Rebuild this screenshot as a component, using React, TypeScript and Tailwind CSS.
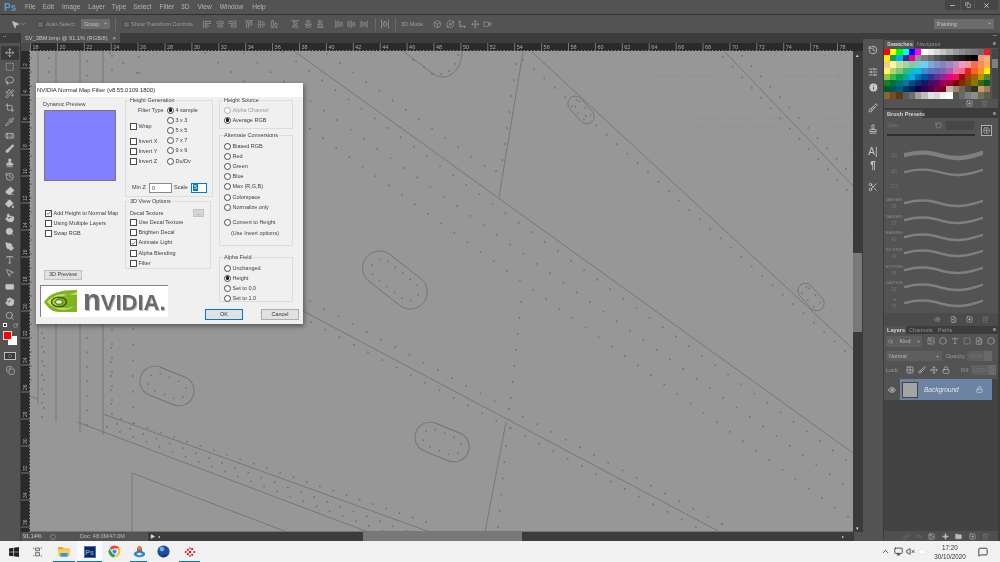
import React from "react";
import {
  Move, ChevronDown, SquareDashed, Lasso, Wand2, Crop, Pipette, Bandage, Brush, Stamp, History,
  Eraser, PaintBucket, Pointer, Search, PenTool, Type, MousePointer2, RectangleHorizontal, Hand,
  AlignStartVertical, AlignCenterVertical, AlignEndVertical, AlignStartHorizontal, AlignCenterHorizontal,
  AlignEndHorizontal, AlignVerticalJustifyStart, AlignVerticalJustifyCenter, AlignVerticalJustifyEnd,
  AlignHorizontalJustifyStart, AlignHorizontalJustifyCenter, AlignHorizontalJustifyEnd, AlignHorizontalSpaceAround,
  RotateCcw, Orbit, Move3d, Video, Box, Minus, X, Copy, ChevronUp, Monitor, VolumeX, Cloud, MessageSquare,
  Info, SlidersHorizontal, Scissors, Trash2, SquarePlus, Eye, Lock, Link, Folder, Image, Circle, Grid2x2, Sparkle,
  FileImage, CircleDashed, RotateCw, Play,
} from "lucide-react";

const SANS = "font-['Liberation_Sans',Arial,sans-serif]";

type R = [number, number, number, number, number];
const rows: R[] = [
  [110, 53, 150, 83, 4], [205, 53, 848, 517, 50], [244, 53, 843, 484, 46], [283, 52, 846, 460, 44],
  [340, 63, 484.6, 166, 12], [327, 54, 327, 54, 1], [534, 69, 845, 351, 31], [742, 56, 846, 169, 12],
  [723, 57, 847, 190, 14], [310, 301, 736, 532, 31], [311, 322, 696, 527, 28], [121, 419, 426, 522, 24],
  [117, 424, 406, 531, 23], [107, 427, 382, 531, 22], [521, 302, 511, 398, 7], [510, 428, 510, 428, 1],
  [506, 446, 498, 527, 6], [509, 409, 509, 409, 1], [516, 64, 502.5, 160, 7], [496, 171, 496, 171, 1],
  [523, 60, 523, 60, 1], [31, 58, 31, 380, 24], [49, 58, 49, 86, 3], [42, 333, 42, 417, 7],
  [44, 338, 44, 408, 6], [87, 61, 87, 425, 26], [112, 56, 112, 84, 3], [111, 348, 111, 404, 5],
  [112, 330, 112, 414, 7], [133, 329, 133, 423, 7], [139, 57, 139, 73, 2],
];
const faint: [number, number, number, number][] = [
  [652, 76, 732, 76], [771, 76, 846, 76], [692, 119, 782, 119], [812, 119, 850, 119], [698, 127, 780, 127],
  [820, 127, 850, 127], [725, 152, 800, 152], [840, 152, 852, 152], [770, 194, 845, 194], [812, 238, 850, 238],
  [782, 55, 852, 153], [825, 55, 850, 97],
];
const lines: [number, number, number, number][] = [
  [294, 51, 853, 453], [532, 52, 853, 349], [523, 52, 499, 197], [725, 52, 853, 186],
  [38, 51, 38, 405], [56, 51, 56, 422], [80, 51, 80, 433], [103, 51, 103, 435],
  [77, 422, 368, 532], [103, 414, 430, 532], [30, 396, 38, 399], [132, 473, 132, 532], [132, 473, 287, 532],
  [303, 311, 720, 532], [506, 422, 485, 532],
];
const ovals: [number, number, number, number, number, number][] = [
  [395, 280, 73, 34, 38, 9.5], [581, 110, 32, 15, 48, 9], [811, 297, 32, 15, 48, 9],
  [167, 386, 56, 30, 22, 10], [442, 442, 56, 30, 22, 10],
];

function Drawing() {
  return (
    <svg viewBox="30 51 823 481" className="block w-[823px] h-[481px]">
      {lines.map(([a, b, c, d], i) => (
        <line key={i} x1={a} y1={b} x2={c} y2={d} stroke="#747474" strokeWidth="0.9" />
      ))}
      <path d="M403 51 L432 73 Q441 80 451 75 Q462 67 462 51" fill="none" stroke="#747474" strokeWidth="0.9" />
      {rows.flatMap(([a, b, c, d, n], i) =>
        Array.from({ length: n }, (_, k) => {
          const t = n > 1 ? k / (n - 1) : 0;
          return <circle key={i + "-" + k} cx={a + (c - a) * t} cy={b + (d - b) * t} r="0.95" fill="#747474" />;
        })
      )}
      {[
        [413, 60], [424, 67], [432, 74], [441, 74], [449, 71], [455, 64], [458, 55],
      ].map(([x, y], i) => <circle key={i} cx={x} cy={y} r="0.9" fill="#747474" />)}
      {faint.map(([a, b, c, d], i) => (
        <line key={i} x1={a} y1={b} x2={c} y2={d} stroke="#868686" strokeWidth="1" strokeDasharray="1 3.5" />
      ))}
      {ovals.map(([x, y, l, h, ang, gap], i) => (
        <g key={i} transform={`rotate(${ang} ${x} ${y})`}>
          <rect x={x - l / 2} y={y - h / 2} width={l} height={h} rx={h / 2} fill="none" stroke="#747474" strokeWidth="0.9" />
          <rect
            x={x - l / 2 + h * 0.27}
            y={y - h / 2 + h * 0.2}
            width={l - h * 0.54}
            height={h * 0.6}
            rx={h * 0.3}
            fill="none"
            stroke="#747474"
            strokeWidth="1.8"
            strokeLinecap="round"
            strokeDasharray={`0 ${gap}`}
          />
        </g>
      ))}
    </svg>
  );
}

function HRuler() {
  const ns = Array.from({ length: 31 }, (_, i) => 18 + i * 2);
  return (
    <svg viewBox="0 0 823 8" className="block w-[823px] h-[8px]">
      <line x1="0" y1="7.5" x2="823" y2="7.5" stroke="#9a9a9a" strokeWidth="1" strokeDasharray="1 2.36" />
      {ns.map((n, i) => (
        <g key={n}>
          <line x1={i * 26.9 + 0.5} y1="0" x2={i * 26.9 + 0.5} y2="8" stroke="#8a8a8a" strokeWidth="0.8" />
          <text x={i * 26.9 + 2.5} y="5.5" fontSize="5.5" fill="#a8a8a8" fontFamily="Liberation Sans">{n}</text>
        </g>
      ))}
    </svg>
  );
}

function VRuler() {
  const ns = Array.from({ length: 18 }, (_, i) => i);
  return (
    <svg viewBox="0 0 9 481" className="block w-[9px] h-[481px]">
      <line x1="8.5" y1="0" x2="8.5" y2="481" stroke="#9a9a9a" strokeWidth="1" strokeDasharray="1 2.36" />
      {ns.map((n) => (
        <g key={n}>
          <line x1="0" y1={n * 27 + 17} x2="9" y2={n * 27 + 17} stroke="#8a8a8a" strokeWidth="0.8" />
          <text transform={`translate(6 ${n * 27 + 15}) rotate(-90)`} fontSize="5" fill="#a8a8a8" fontFamily="Liberation Sans">{n * 2 + 2}</text>
        </g>
      ))}
    </svg>
  );
}

function Radio({ label, checked, disabled }: { label: string; checked?: boolean; disabled?: boolean }) {
  return (
    <div className={`flex items-center h-[10.2px] gap-[1.5px] ${disabled ? "text-[#9a9a9a]" : "text-[#3c3c3c]"}`}>
      <span className={`w-[7px] h-[7px] shrink-0 rounded-full border-[0.8px] ${disabled ? "border-[#aaaaaa]" : "border-[#4a4a4a]"} bg-white flex items-center justify-center`}>
        {checked && <span className="w-[3.6px] h-[3.6px] rounded-full bg-[#111111]" />}
      </span>
      <span className="whitespace-nowrap">{label}</span>
    </div>
  );
}

function Check({ label, checked }: { label: string; checked?: boolean }) {
  return (
    <div className="flex items-center h-[10.2px] gap-[1.5px] text-[#3c3c3c]">
      <span className="w-[7px] h-[7px] shrink-0 border-[0.8px] border-[#4a4a4a] bg-white flex items-center justify-center">
        {checked && (
          <svg viewBox="0 0 8 8" className="w-[6px] h-[6px]">
            <path d="M1 4 L3 6.5 L7 1.5" fill="none" stroke="#333" strokeWidth="1" />
          </svg>
        )}
      </span>
      <span className="whitespace-nowrap">{label}</span>
    </div>
  );
}

function Group({ title, className, children }: { title: string; className: string; children: React.ReactNode }) {
  return (
    <fieldset className={`border-[0.8px] border-[#dcdcdc] ${className}`}>
      <legend className="ml-[3px] px-px h-[7px] leading-[7px] text-[#3c3c3c]">{title}</legend>
      <div className="pl-[4px]">{children}</div>
    </fieldset>
  );
}

function NvLogo() {
  return (
    <svg viewBox="0 0 34 24" className="w-[34px] h-[24px] shrink-0">
      <path d="M0 13 C6 4 15 1 33 1 V23 H15 C8 23 4 19 0 13Z" fill="#7fb321" />
      <path d="M3 13 C9 6 17 4 24 6 L33 3 V6 C26 5 16 6 9 13 C14 19 22 21 30 17 C24 23 11 22 3 13Z" fill="#c2e26a" />
      <ellipse cx="15" cy="13" rx="7.5" ry="4.8" fill="none" stroke="#3c5a10" strokeWidth="1.5" />
      <ellipse cx="15" cy="13" rx="3.6" ry="2.3" fill="#e8f4c4" stroke="#4b6d10" strokeWidth="1" />
    </svg>
  );
}

function Dialog() {
  return (
    <div className={`absolute left-[6px] top-[32px] w-[267px] h-[241px] bg-[#f0f0f0] shadow-[1px_2px_5px_rgba(0,0,0,0.45)] text-[5.5px] leading-[7px] ${SANS}`}>
      <div className="h-[14px] bg-white flex items-center pl-[1px] text-[5.95px] text-[#2a2a2a]">NVIDIA Normal Map Filter (v8.55.0109.1800)</div>
      <div className="flex">
        <div className="w-[177px] flex flex-col">
          <div className="flex">
            <div className="w-[89px] pl-[7px] flex flex-col">
              <div className="mt-[4px] h-[7px] text-[#3c3c3c]">Dynamic Preview</div>
              <div className="mt-[2px] ml-[1px] w-[72px] h-[71px] bg-[#8080ff] border-[1.5px] border-[#777777]" />
              <div className="mt-[27px] ml-[2px] flex flex-col">
                <Check label="Add Height to Normal Map" checked />
                <Check label="Using Multiple Layers" />
                <Check label="Swap RGB" />
              </div>
              <div className="mt-[31px] ml-[1px] w-[38px] h-[10px] bg-[#e1e1e1] border-[0.8px] border-[#c0c0c0] flex items-center justify-center text-[#3c3c3c]">3D Preview</div>
            </div>
            <div className="w-[88px] flex flex-col">
              <Group title="Height Generation" className="h-[100px]">
                <div className="flex mt-[1px]">
                  <div className="w-[37px] flex flex-col">
                    <div className="h-[10px] pl-[8px] leading-[10px] text-[#3c3c3c] whitespace-nowrap">Filter Type</div>
                    <div className="mt-[6px]"><Check label="Wrap" /></div>
                    <div className="mt-[5px]"><Check label="Invert X" /></div>
                    <Check label="Invert Y" />
                    <Check label="Invert Z" />
                  </div>
                  <div className="flex flex-col">
                    <Radio label="4 sample" checked />
                    <Radio label="3 x 3" />
                    <Radio label="5 x 5" />
                    <Radio label="7 x 7" />
                    <Radio label="9 x 9" />
                    <Radio label="Du/Dv" />
                  </div>
                </div>
                <div className="flex items-center mt-[16px] pl-[2px] text-[#3c3c3c]">
                  <span className="w-[17px]">Min Z</span>
                  <span className="w-[23px] h-[10px] bg-white border-[0.8px] border-[#8a8a8a] pl-[2px] leading-[9px]">0</span>
                  <span className="ml-[2px] w-[17px]">Scale</span>
                  <span className="w-[16px] h-[10px] bg-white border-[1px] border-[#0078d7] pl-[1px] flex items-center">
                    <span className="bg-[#0078d7] text-white px-px">5</span>
                  </span>
                </div>
              </Group>
              <Group title="3D View Options" className="mt-[1px] h-[71px] w-[86px]">
                <div className="flex items-center h-[9px] mt-[3.5px] text-[#3c3c3c]">
                  <span className="w-[63px]">Decal Texture</span>
                  <span className="w-[11px] h-[8px] bg-[#d6d6d6] border-[0.5px] border-[#c4c4c4] flex items-center justify-center leading-[5px]">...</span>
                </div>
                <div className="flex flex-col">
                  <Check label="Use Decal Texture" />
                  <Check label="Brighten Decal" />
                  <Check label="Animate Light" checked />
                  <Check label="Alpha Blending" />
                  <Check label="Filter" />
                </div>
              </Group>
            </div>
          </div>
          <div className="mt-[5px] ml-[4px] w-[128px] h-[32px] bg-white border-t-[1.5px] border-l-[1.5px] border-[#808080] flex items-center pl-[3px] gap-[5px] overflow-hidden">
            <NvLogo />
            <span className="flex items-baseline font-bold text-[22px] leading-[22px] text-[#6a6a6a] [text-shadow:1px_1px_0_#bdbdbd]">
              <span className="text-[29px]">n</span>
              <span>VIDIA.</span>
            </span>
          </div>
        </div>
        <div className="w-[90px] flex flex-col pl-[6px]">
          <Group title="Height Source" className="w-[74px] h-[32px]">
            <div className="mt-[1px]">
              <Radio label="Alpha Channel" disabled />
              <Radio label="Average RGB" checked />
            </div>
          </Group>
          <Group title="Alternate Conversions" className="mt-[3px] w-[74px] h-[114px]">
            <div className="mt-[2px]">
              <Radio label="Biased RGB" />
              <Radio label="Red" />
              <Radio label="Green" />
              <Radio label="Blue" />
              <Radio label="Max (R,G,B)" />
              <Radio label="Colorspace" />
              <Radio label="Normalize only" />
              <div className="mt-[5px]"><Radio label="Convert to Height" /></div>
              <div className="h-[10px] pl-[7px] leading-[10px] text-[#3c3c3c]">(Use Invert options)</div>
            </div>
          </Group>
          <Group title="Alpha Field" className="mt-[8px] w-[74px] h-[48px]">
            <div className="mt-[2px]">
              <Radio label="Unchanged" />
              <Radio label="Height" checked />
              <Radio label="Set to 0.0" />
              <Radio label="Set to 1.0" />
            </div>
          </Group>
          <div className="flex mt-[7px] -ml-[14px]">
            <div className="w-[38px] h-[11px] bg-[#e1e1e1] border-[1.2px] border-[#0078d7] flex items-center justify-center text-[#333333]">OK</div>
            <div className="ml-[18px] w-[38px] h-[11px] bg-[#e1e1e1] border-[0.8px] border-[#adadad] flex items-center justify-center text-[#333333]">Cancel</div>
          </div>
        </div>
      </div>
    </div>
  );
}

const menu: [string, string][] = [
  ["File", "ml-[10px]"], ["Edit", "ml-[7px]"], ["Image", "ml-[8px]"], ["Layer", "ml-[8px]"], ["Type", "ml-[7px]"],
  ["Select", "ml-[7px]"], ["Filter", "ml-[8px]"], ["3D", "ml-[7px]"], ["View", "ml-[8px]"], ["Window", "ml-[8px]"], ["Help", "ml-[9px]"],
];

function MenuBar() {
  return (
    <div className={`h-[15px] shrink-0 bg-[#535353] border-b border-[#2f2f2f] flex items-center text-[6.6px] text-[#b4b4b4] ${SANS}`}>
      <span className="ml-[4px] w-[11px] font-bold text-[10px] text-[#5e9ac6]">Ps</span>
      {menu.map(([m, c]) => <span key={m} className={c}>{m}</span>)}
      <div className="ml-auto mr-[2px] self-start flex gap-px h-[10px] text-[#d8d8d8]">
        <span className="w-[15px] bg-[#464646] flex items-center justify-center"><Minus size={7} strokeWidth={2.5} /></span>
        <span className="w-[13px] bg-[#464646] flex items-center justify-center"><Copy size={6} strokeWidth={2} /></span>
        <span className="w-[23px] bg-[#464646] flex items-center justify-center"><X size={7} strokeWidth={3} /></span>
      </div>
    </div>
  );
}

const alignGroups: [string, any[]][] = [
  ["ml-0", [AlignStartVertical, AlignCenterVertical, AlignEndVertical]],
  ["ml-[8px]", [AlignStartHorizontal, AlignCenterHorizontal, AlignEndHorizontal]],
  ["ml-[13px]", [AlignVerticalJustifyStart, AlignVerticalJustifyCenter, AlignVerticalJustifyEnd]],
  ["ml-[10px]", [AlignHorizontalJustifyStart, AlignHorizontalJustifyCenter, AlignHorizontalJustifyEnd]],
];
const icons3d = [Box, Orbit, Move3d, Move, Video];

function OptionsBar() {
  return (
    <div className={`h-[18px] shrink-0 bg-[#535353] flex items-center text-[5.5px] text-[#9c9c9c] ${SANS}`}>
      <span className="ml-[11px] w-[16px] flex items-center text-[#bdbdbd]"><MousePointer2 size={9} fill="currentColor" /><ChevronDown size={6} /></span>
      <span className="ml-[10px] w-[7px] h-[7px] bg-[#6a6a6a] border-[0.5px] border-[#444444]" />
      <span className="ml-[2px] w-[35px] whitespace-nowrap">Auto-Select:</span>
      <span className="w-[29px] h-[10px] bg-[#6c6c6c] rounded-[1px] flex items-center justify-between px-[3px] text-[#c4c4c4]">Group<span className="text-[5px]">÷</span></span>
      <span className="ml-[5px] w-px h-[13px] bg-[#6a6a6a]" />
      <span className="ml-[7px] w-[7px] h-[7px] bg-[#6a6a6a] border-[0.5px] border-[#444444]" />
      <span className="ml-[1px] w-[72px] whitespace-nowrap">Show Transform Controls</span>
      {alignGroups.map(([c, g], k) => (
        <div key={k} className={`flex gap-[4px] text-[#9a9a9a] ${c}`}>
          {g.map((I, i) => <I key={i} size={8.5} />)}
        </div>
      ))}
      <span className="ml-[7px] w-px h-[13px] bg-[#6a6a6a]" />
      <span className="ml-[4px] text-[#9a9a9a]"><AlignHorizontalSpaceAround size={10} /></span>
      <span className="ml-[5px] w-px h-[13px] bg-[#6a6a6a]" />
      <span className="ml-[5px] w-[32px] whitespace-nowrap">3D Mode:</span>
      <div className="flex gap-[4px] text-[#9a9a9a]">
        {icons3d.map((I, i) => <I key={i} size={8.5} />)}
      </div>
      <span className="ml-auto mr-[6px] w-[60px] h-[10px] bg-[#6c6c6c] rounded-[1px] flex items-center justify-between px-[3px] text-[#c4c4c4]">Painting<span className="text-[5px]">÷</span></span>
    </div>
  );
}

const tools: { I: any; fill?: boolean; mt?: string; active?: boolean }[] = [
  { I: Move, active: true, mt: "mt-[3px]" },
  { I: SquareDashed }, { I: Lasso }, { I: Wand2 }, { I: Crop }, { I: Pipette },
  { I: Bandage, fill: false }, { I: Brush, fill: true }, { I: Stamp, fill: true }, { I: History },
  { I: Eraser, fill: true }, { I: PaintBucket, fill: true }, { I: Pointer, fill: true }, { I: Search, fill: true },
  { I: PenTool, fill: true, mt: "mt-px" }, { I: Type, mt: "mt-[-0.4px]" }, { I: MousePointer2, mt: "mt-[-0.4px]" },
  { I: RectangleHorizontal, fill: true }, { I: Hand, fill: true, mt: "mt-px" }, { I: Search },
];

function LeftTools() {
  return (
    <div className="w-[21px] shrink-0 bg-[#535353] border-r border-[#3a3a3a] flex flex-col items-center">
      <div className="w-full h-[10px] bg-[#3c3c3c] text-[#bdbdbd] text-[6px] leading-[6px] pl-[3px] font-bold">··</div>
      {tools.map(({ I, fill, mt, active }, i) => (
        <div key={i} className={`w-[18px] h-[13.75px] shrink-0 flex items-center justify-center text-[#c4c4c4] ${mt ?? ""} ${active ? "bg-[#3a3a3a] rounded-[1px]" : ""}`}>
          <I size={9.5} strokeWidth={1.8} fill={fill ? "currentColor" : "none"} />
        </div>
      ))}
      <div className="w-[15px] h-[5px] mt-[1px] flex justify-between text-[#d0d0d0]">
        <span className="w-[4px] h-[4px] bg-[#222222] border-[0.5px] border-white" />
        <RotateCw size={5} />
      </div>
      <div className="relative w-[15px] h-[15px] mt-[3px] mb-[5px]">
        <span className="absolute left-[5px] top-[5px] w-[9px] h-[9px] bg-white" />
        <span className="absolute left-0 top-0 w-[9px] h-[9px] bg-[#ff0000] border-[0.5px] border-[#ddd]" />
      </div>
      <div className="w-[12px] h-[8px] mt-[1px] border border-[#c0c0c0] bg-[#3a3a3a] flex items-center justify-center">
        <Circle size={4} className="text-[#c0c0c0]" />
      </div>
      <div className="mt-[6px] text-[#b4b4b4]"><Copy size={9} /></div>
    </div>
  );
}

function Center() {
  return (
    <div className="w-[842px] shrink-0 flex flex-col bg-[#3c3c3c]">
      <div className={`h-[10px] shrink-0 flex text-[5.7px] text-[#c4c4c4] ${SANS}`}>
        <div className="w-[99px] bg-[#535353] flex items-center justify-between px-[4px] whitespace-nowrap">
          <span>SV_3BM.bmp @ 91.1% (RGB/8)</span><span className="text-[6px]">×</span>
        </div>
      </div>
      <div className="h-[8px] shrink-0 flex bg-[#2a2a2a]">
        <div className="w-[9px] bg-[#4a4a4a]" />
        <HRuler />
      </div>
      <div className="h-[481px] shrink-0 flex">
        <div className="bg-[#2a2a2a]"><VRuler /></div>
        <div className="relative w-[823px] h-[481px] bg-[#979797] border-b border-[#777]">
          <Drawing />
          <Dialog />
        </div>
        <div className="w-[9px] flex flex-col bg-[#3a3a3a]">
          <div className="h-[8px] text-[#ddd] text-[5px] leading-[8px] text-center">▴</div>
          <div className="mt-[194px] h-[79px] bg-[#787878]" />
          <div className="mt-auto h-[8px] text-[#ddd] text-[5px] leading-[8px] text-center">▾</div>
        </div>
      </div>
      <div className={`h-[9px] shrink-0 flex items-center text-[5.5px] text-[#bdbdbd] ${SANS}`}>
        <div className="w-[127px] h-full bg-[#535353] flex items-center">
          <span className="ml-[2px] w-[27px] text-[#d0d0d0]">91.14%</span>
          <CircleDashed size={6} />
          <span className="ml-[24px] whitespace-nowrap">Doc: 48.0M/47.0M</span>
        </div>
        <Play size={5} fill="currentColor" className="ml-[2px] text-[#dddddd]" />
        <span className="ml-[3px] text-[#ddd] text-[4px]">◂</span>
        <div className="ml-[203px] w-[159px] h-full bg-[#787878]" />
        <span className="ml-auto mr-[10px] text-[#ddd] text-[4px]">▸</span>
        <div className="w-[9px] h-full bg-[#535353]" />
      </div>
    </div>
  );
}

const stripItems: { n: React.ReactNode; cls: string }[] = [
  { n: <History size={10} />, cls: "mt-[4px]" },
  { n: <SlidersHorizontal size={10} />, cls: "mt-[8px]" },
  { n: <Info size={11} fill="#c8c8c8" stroke="#535353" />, cls: "mt-px" },
  { n: <Brush size={10} />, cls: "mt-[7px]" },
  { n: <Stamp size={10} />, cls: "mt-[7px]" },
  { n: <span className={`text-[10px] ${SANS}`}>A|</span>, cls: "mt-[8px]" },
  { n: <span className={`text-[10px] font-bold ${SANS}`}>¶</span>, cls: "" },
  { n: <Scissors size={10} />, cls: "mt-[8px]" },
];

function Strip() {
  return (
    <div className="w-[20px] shrink-0 bg-[#535353] flex flex-col items-center text-[#c8c8c8]">
      <div className="w-full h-[6px] bg-[#3c3c3c] shrink-0" />
      {stripItems.map((s, i) => (
        <div key={i} className={`w-full h-[14px] shrink-0 flex items-center justify-center ${s.cls}`}>{s.n}</div>
      ))}
    </div>
  );
}

const swatches = [
  "FF0000 FFFF00 00FF00 00FFFF 0000FF FF00FF FFFFFF EBEBEB D7D7D7 C3C3C3 AFAFAF 9B9B9B 8C8C8C 808080 787878 6E6E6E ED1C24",
  "FFF200 00A651 00AEEF 2E3192 EC008C 8F8F8F 7B7B7B 686868 555555 434343 363636 262626 1A1A1A 0D0D0D 000000 F7977A F9AD81",
  "FDC68A FFF79A C4DF9B A2D39C 82CA9D 7BCDC8 6ECFF6 7EA7D8 8493CA 8882BE A187BE BC8DBF F49AC2 F6989D F26C4F F68E55 FBAF5C",
  "FFF467 ACD372 7CC576 3BB878 1ABBB4 00BFF3 438CCA 5574B9 5C6BB9 8560A8 A864A8 F06EAA F26D7D ED1C24 F26522 F7941D FFF200",
  "8DC63F 39B54A 00A651 00A99D 00AEEF 0072BC 0054A6 2E3192 662D91 92278F EC008C ED145B 9E0B0F A0410D A36209 ABA000 598527",
  "197B30 007236 00746B 0076A3 004B80 003471 1B1464 440E62 630460 9E005D 9E0039 790000 7B2E00 7D4900 827B00 406618 005E20",
  "005826 005952 005B7F 003663 002157 0D004C 32004B 4B0049 7B0046 7A0026 C7B299 998675 736357 534741 37302A C69C6D A67C52",
  "8C6239 754C24 603913 5C5C5C 6E6E6E A69C8F BDBDBD E0E0E0 D8D8D8 F4F4F4 FFFFFF 59554D 656D60 7B7F80 8E8F83 6B7058 585E4F",
].map((r) => r.split(" "));

function TabRow({ tabs, active }: { tabs: [string, string][]; active: number }) {
  return (
    <div className={`h-[8px] shrink-0 bg-[#3c3c3c] flex items-stretch text-[5.6px] leading-[8px] ${SANS}`}>
      {tabs.map(([t, w], i) => (
        <span key={t} className={`${w} pl-[3px] whitespace-nowrap ${i === active ? "bg-[#535353] text-[#d4d4d4] font-bold" : "text-[#8e8e8e]"}`}>{t}</span>
      ))}
      <span className="ml-auto mr-[2px] text-[#c4c4c4] leading-[7px]">≡</span>
    </div>
  );
}

const brushes: [string, string][] = [
  ["DANGER", "56"], ["DANGER", "37"], ["MASKING", "42"], ["NO STEP", "41"], ["NO PUSH", "35"], ["CAUTION", "23"], ["➠", "74"],
];

function Wave({ w, cls }: { w: number; cls: string }) {
  return (
    <svg viewBox="0 0 82 10" className={`block w-[79px] ${cls}`}>
      <path d="M1 5 C16 1 26 2 40 6 S66 8 81 3" fill="none" stroke="#7f7f7f" strokeWidth={w} strokeLinecap="round" />
    </svg>
  );
}

function Panels() {
  return (
    <div className={`w-[117px] shrink-0 bg-[#3c3c3c] flex flex-col pr-[2px] pl-px text-[#9a9a9a] ${SANS}`}>
      <div className="h-[7px] shrink-0 text-right pr-[1px] text-[#bdbdbd] text-[6px] leading-[5px] font-bold">··</div>
      <TabRow tabs={[["Swatches", "w-[30px]"], ["Navigator", "w-[29px]"]]} active={0} />
      <div className="h-[60px] shrink-0 bg-[#535353] flex flex-col">
        <div className="flex h-[51px] pt-px">
          <div className="w-[106px] flex flex-col">
            {swatches.map((r, i) => (
              <div key={i} className="flex h-[6.2px]">
                {r.map((c, j) => <span key={j} className="flex-1" style={{ background: "#" + c }} />)}
              </div>
            ))}
          </div>
          <div className="ml-[2px] w-[6px] bg-[#464646] flex flex-col">
            <div className="mt-[10px] h-[9px] bg-[#808080]" />
          </div>
        </div>
        <div className="flex items-center justify-end gap-[8px] pr-[10px] h-[9px] text-[#bcbcbc]">
          <SquarePlus size={7} /><Trash2 size={7} className="text-[#777777]" />
        </div>
      </div>
      <div className="h-[2px] shrink-0" />
      <TabRow tabs={[["Brush Presets", "w-[38px]"]]} active={0} />
      <div className="h-[208px] shrink-0 bg-[#535353] flex flex-col">
        <div className="h-[28px] shrink-0 relative flex items-start pt-[3px] text-[5.5px] text-[#777]">
          <span className="ml-[3px] w-[48px] leading-[9px]">Size:</span>
          <RotateCcw size={7} className="mt-px text-[#9a9a9a]" />
          <span className="ml-[4px] w-[28px] h-[9px] bg-[#474747]" />
          <span className="ml-[7px] w-[11px] h-[11px] mt-[4px] border border-[#b0b0b0] bg-[#444] flex items-center justify-center text-[#c4c4c4]"><Grid2x2 size={7} /></span>
          <span className="absolute left-[3px] top-[16px] w-[88px] h-[2px] bg-[#2e2e2e]" />
        </div>
        <div className="flex flex-col h-[49px] shrink-0">
          <div className="flex items-center h-[18px]">
            <span className="w-[20px] text-[5px] text-[#777777] text-center leading-[6px]">20</span>
            <Wave w={4.5} cls="h-[12px]" />
          </div>
          <div className="flex items-center h-[15px]">
            <span className="w-[20px] text-[5px] text-[#777777] text-center">60</span>
            <Wave w={2.4} cls="h-[10px]" />
          </div>
          <div className="flex items-center h-[16px]">
            <span className="w-[20px] text-[5px] text-[#6f6f6f] text-center">125</span>
          </div>
        </div>
        <div className="flex flex-col">
          {brushes.map(([a, b], i) => (
            <div key={i} className="flex items-center h-[16.7px]">
              <span className="w-[20px] flex flex-col items-center text-[3.8px] leading-[6px] text-[#8c8c8c] whitespace-nowrap">
                <span>{a}</span><span className="text-[4.6px] leading-[7px] text-[#777777]">{b}</span>
              </span>
              <Wave w={2.6} cls="h-[10px]" />
            </div>
          ))}
        </div>
        <div className="mt-auto h-[13px] flex items-center justify-end gap-[9px] pr-[9px] bg-[#4b4b4b] text-[#bcbcbc]">
          <Eye size={7} className="text-[#999999]" /><FileImage size={7} /><SquarePlus size={7} /><Trash2 size={7} className="text-[#777777]" />
        </div>
      </div>
      <TabRow tabs={[["Layers", "w-[22px]"], ["Channels", "w-[29px]"], ["Paths", "w-[24px]"]]} active={0} />
      <div className="flex-1 bg-[#434343] flex flex-col">
        <div className="h-[45px] shrink-0 bg-[#535353] flex flex-col text-[5.5px]">
          <div className="h-[14.5px] flex items-center pl-[2px]">
            <span className="w-[36px] h-[11px] bg-[#5e5e5e] flex items-center justify-between px-[2px] text-[#bbbbbb]"><Search size={5} />Kind<span>÷</span></span>
            <div className="ml-[5px] flex gap-[4px] text-[#a8a8a8]">
              <Image size={8} /><Circle size={8} /><Type size={8} /><SquareDashed size={8} /><FileImage size={8} /><Circle size={8} fill="#555" />
            </div>
          </div>
          <div className="h-[14.5px] flex items-center pl-[2px]">
            <span className="w-[56px] h-[10px] bg-[#5e5e5e] flex items-center justify-between px-[3px] text-[#b8b8b8]">Normal<span>÷</span></span>
            <span className="ml-[4px] w-[21px] whitespace-nowrap">Opacity:</span>
            <span className="w-[17px] h-[10px] bg-[#5e5e5e] text-[#777777] leading-[10px] text-center">100%</span>
            <span className="w-[8px] h-[10px] bg-[#6a6a6a]" />
          </div>
          <div className="h-[14.5px] flex items-center pl-[2px]">
            <span className="w-[20px]">Lock:</span>
            <div className="flex gap-[4px] text-[#c0c0c0] w-[55px]"><Grid2x2 size={8} /><Brush size={8} /><Move size={8} /><Lock size={8} /></div>
            <span className="w-[10px]">Fill:</span>
            <span className="w-[17px] h-[10px] bg-[#5e5e5e] text-[#777777] leading-[10px] text-center">100%</span>
            <span className="w-[8px] h-[10px] bg-[#6a6a6a]" />
          </div>
        </div>
        <div className="flex h-[21px] shrink-0">
          <span className="w-[16px] bg-[#535353] flex items-center justify-center text-[#e0e0e0]"><Eye size={8} /></span>
          <div className="w-[92px] bg-[#6c83a3] flex items-center pl-[2px]">
            <span className="w-[16px] h-[16px] bg-[#a4a4a4] border border-[#444444] shrink-0" />
            <span className="ml-[6px] text-[6.5px] italic text-[#e6e6e6]">Background</span>
            <Lock size={7} className="ml-auto mr-[9px] text-[#e0e0e0]" />
          </div>
        </div>
        <div className="mt-auto h-[10px] bg-[#4f4f4f] flex items-center justify-end gap-[6.5px] pr-[9px] text-[#bcbcbc]">
          <Link size={7} className="text-[#777777]" />
          <span className="text-[6px] italic text-[#777777]">fx</span>
          <Image size={7} /><Sparkle size={7} fill="currentColor" /><Folder size={7} fill="currentColor" /><SquarePlus size={7} /><Trash2 size={7} className="text-[#777777]" />
        </div>
      </div>
    </div>
  );
}

function Chrome() {
  return (
    <svg viewBox="0 0 24 24" className="w-[13px] h-[13px]">
      <path d="M12 1a11 11 0 0 1 9.5 5.5H12a5.5 5.5 0 0 0-5 3.2L3.3 5A11 11 0 0 1 12 1Z" fill="#e04a3f" />
      <path d="M21.9 7.5A11 11 0 0 1 12.7 23l4-7a5.5 5.5 0 0 0 .3-8.5Z" fill="#f6c232" />
      <path d="M2.7 6.3 7.4 14.5a5.5 5.5 0 0 0 6.4 2.8L11.4 23A11 11 0 0 1 2.7 6.3Z" fill="#2f9e4f" />
      <circle cx="12" cy="12" r="4.2" fill="#3f83ea" stroke="#fff" strokeWidth="1" />
    </svg>
  );
}

function TaskIcon({ cls, children, under }: { cls: string; children: React.ReactNode; under?: string }) {
  return (
    <div className={`relative h-full flex items-center justify-center ${cls}`}>
      {children}
      {under && <span className={`absolute bottom-0 h-[1.5px] bg-[#0078d7] ${under}`} />}
    </div>
  );
}

function Taskbar() {
  return (
    <div className={`flex-1 bg-[#f1f1f1] flex items-center ${SANS}`}>
      <TaskIcon cls="ml-[7px] w-[13px]">
        <svg viewBox="0 0 16 16" className="w-[10px] h-[10px]">
          <path d="M0 2.2 6.5 1.3V7.5H0ZM7.5 1.2 16 0V7.5H7.5ZM0 8.5H6.5V14.7L0 13.8ZM7.5 8.5H16V16L7.5 14.8Z" fill="#222222" />
        </svg>
      </TaskIcon>
      <TaskIcon cls="ml-[11px] w-[12px]">
        <svg viewBox="0 0 14 14" className="w-[9px] h-[10px]">
          <path d="M0 1H2M0 13H2M4 1H10V5H4ZM4 8H10V13H4ZM12 1H14M12 13H14" stroke="#444" fill="none" strokeWidth="1.2" />
        </svg>
      </TaskIcon>
      <TaskIcon cls="ml-[10px] w-[22px]" under="left-0 right-0">
        <svg viewBox="0 0 16 14" className="w-[12px] h-[11px]">
          <path d="M0 1H6L8 3H15V5H0Z" fill="#e2a92d" />
          <path d="M0 4H16V13H0Z" fill="#f9cf5a" />
          <path d="M3 9H13V14H3Z" fill="#3a97dc" />
        </svg>
      </TaskIcon>
      <TaskIcon cls="ml-[2px] w-[25px] bg-[#fafafa]" under="left-0 right-0">
        <span className="w-[12px] h-[12px] bg-[#14264f] border-[0.8px] border-[#3f74c2] text-[7px] font-bold leading-[11px] text-center text-[#5ca7e8]">Ps</span>
      </TaskIcon>
      <TaskIcon cls="ml-[6px] w-[13px]"><Chrome /></TaskIcon>
      <TaskIcon cls="ml-[9px] w-[18px]" under="left-0 right-[1px]">
        <svg viewBox="0 0 16 16" className="w-[13px] h-[13px]">
          <ellipse cx="8" cy="11" rx="7" ry="4" fill="#2d8bd0" />
          <rect x="5" y="3" width="6" height="8" fill="#5a6f8f" />
          <circle cx="8" cy="3.5" r="2.5" fill="#e88432" />
          <ellipse cx="8" cy="11" rx="3" ry="1.5" fill="#e7f1fa" />
        </svg>
      </TaskIcon>
      <TaskIcon cls="ml-[9px] w-[13px]">
        <svg viewBox="0 0 16 16" className="w-[13px] h-[13px]">
          <circle cx="8" cy="8" r="7.5" fill="#1e4d9e" />
          <circle cx="6" cy="5" r="3" fill="#7aa8e6" />
          <path d="M3 12 Q8 15 13 11 Q11 15 7 15Z" fill="#0c2a66" />
        </svg>
      </TaskIcon>
      <TaskIcon cls="ml-[9px] w-[21px]" under="left-0 right-0">
        <svg viewBox="0 0 16 14" className="w-[12px] h-[10px]">
          {[[2, 7, 1.5], [5, 4, 1.6], [5, 10, 1.6], [8, 7, 1.8], [11, 3, 1.6], [11, 11, 1.6], [14, 7, 1.5], [8, 1.5, 1.2], [8, 12.5, 1.2]].map(([x, y, r], i) => (
            <circle key={i} cx={x} cy={y} r={r} fill="#d5202c" />
          ))}
        </svg>
      </TaskIcon>
      <div className="ml-auto flex items-center text-[#222222]">
        <ChevronUp size={9} />
        <Monitor size={9} className="ml-[4px]" />
        <VolumeX size={9} className="ml-[3px]" />
        <Cloud size={9} fill="#ffffff" className="ml-[3px] text-[#dddddd]" />
        <div className="ml-[3px] w-[40px] flex flex-col items-center text-[6.3px] leading-[9px] text-[#333333]">
          <span>17:20</span>
          <span>30/10/2020</span>
        </div>
        <MessageSquare size={10} className="ml-[8px] mr-[12px]" />
      </div>
    </div>
  );
}

export default function App() {
  return (
    <div className="w-[1000px] h-[562px] overflow-hidden flex flex-col bg-[#3c3c3c] blur-[0.3px]">
      <MenuBar />
      <OptionsBar />
      <div className="h-[508px] shrink-0 flex">
        <LeftTools />
        <Center />
        <Strip />
        <Panels />
      </div>
      <Taskbar />
    </div>
  );
}
